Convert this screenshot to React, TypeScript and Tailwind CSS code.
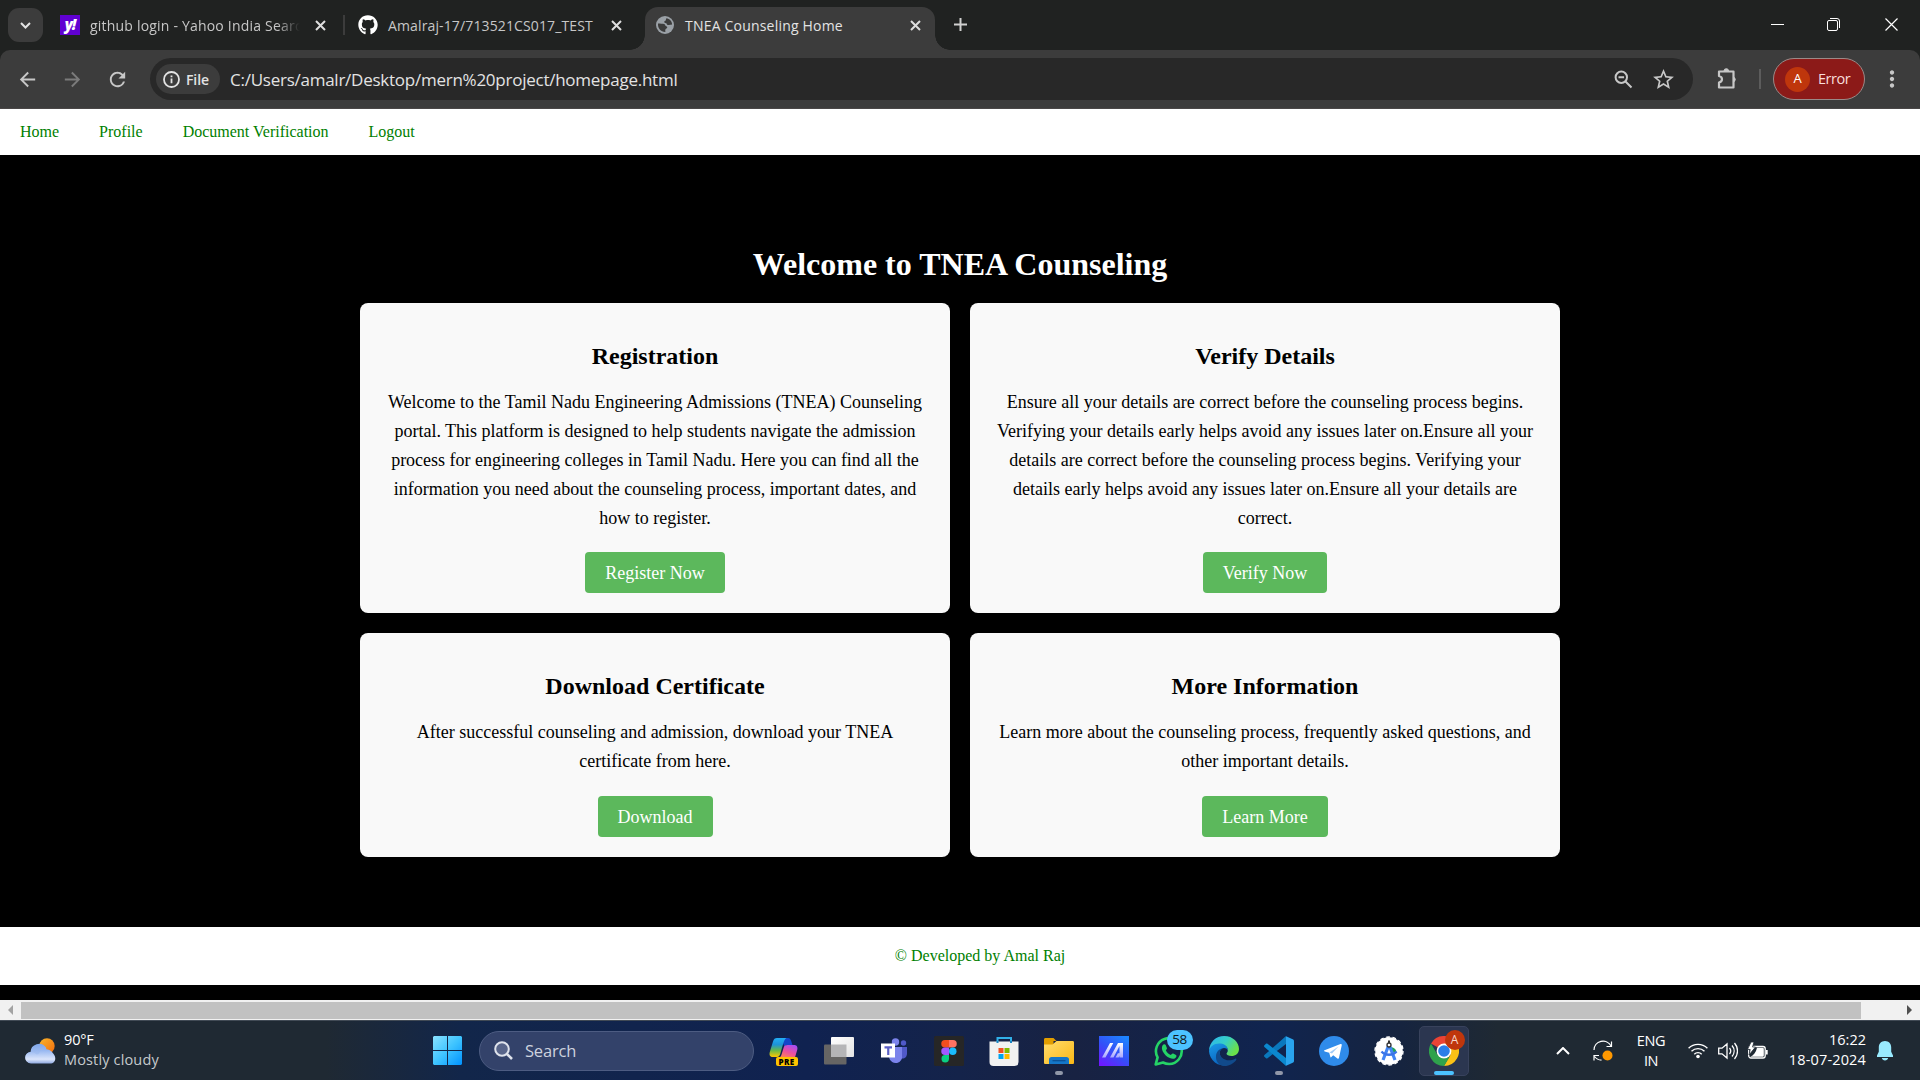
import type { ReactNode } from "react";
import { MdArrowBack, MdArrowForward, MdRefresh, MdStarOutline, MdMoreVert } from "react-icons/md";
import { FaGithub } from "react-icons/fa";

/* ---------- Browser chrome ---------- */

function TabClose() {
  return (
    <svg className="size-[11px] shrink-0" viewBox="0 0 11 11" fill="none" stroke="#dedede" strokeWidth="2">
      <path d="M1 1l9 9M10 1l-9 9" />
    </svg>
  );
}

function Globe() {
  return (
    <svg className="size-[18px] shrink-0" viewBox="0 0 18 18">
      <circle cx="9" cy="9" r="9" fill="#9aa0a6" />
      <path d="M2 7.500c2 .2 4.500.2 6.200.6 1.200.4.8 1.900 2 2.100 1.500.3 1.300 1.800.2 2.300-1.200.5-1.300 1.800-1 3.500C5 16.200 1.600 12.500 2 7.500z" fill="#3c3c3c" />
      <path d="M10.500 2.200c3 .4 5.400 2.800 5.600 6-1 .8-1.900.3-2.900.7-1.300.5-2.300-.2-2.500-1.200-.2-.9-2.300-.3-2.500-1.600-.1-1 1.200-1 1.600-1.800.3-.7 0-1.500.7-2.100z" fill="#3c3c3c" />
    </svg>
  );
}

function TabStrip() {
  return (
    <div className="flex h-[50px] bg-[#202221] text-[14px] leading-[20px] text-[#c7c7c7]">
      <div className="mt-2 ml-2 flex h-[34px] w-[35px] items-center justify-center rounded-[11px] bg-[#3c3c3c]">
        <svg className="size-[11px]" viewBox="0 0 11 11" fill="none" stroke="#e3e3e3" strokeWidth="2">
          <path d="M1 3l4.500 4.500L10 3" />
        </svg>
      </div>
      <div className="ml-[17px] flex h-[50px] w-[283px] shrink-0 items-center">
        <div className="flex size-5 shrink-0 items-center justify-center bg-[#6001d2] text-[15px] leading-[18px] font-black text-white italic">
          <span className="-mt-[3px] tracking-[-1px]">y!</span>
        </div>
        <div className="mt-px ml-[10px] w-[212px] overflow-hidden whitespace-nowrap tracking-[0.2px] [mask-image:linear-gradient(90deg,#000_88%,transparent_99%)]">
          github login - Yahoo India Search
        </div>
        <div className="ml-[13px] flex"><TabClose /></div>
      </div>
      <div className="mt-[15px] h-5 w-[2px] bg-[#3c3c3c]" />
      <div className="ml-[13px] flex h-[50px] w-[287px] items-center">
        <FaGithub className="size-5 shrink-0 text-white" />
        <div className="mt-px ml-[10px] w-[213px] whitespace-nowrap tracking-[0.13px]">Amalraj-17/713521CS017_TEST</div>
        <div className="ml-[10px] flex"><TabClose /></div>
      </div>
      <div className="-ml-[15px] flex h-[50px]">
        <div className="size-[15px] self-end bg-[radial-gradient(circle_at_0_0,transparent_14.500px,#3c3c3c_15px)]" />
        <div className="mt-[7px] flex h-[43px] w-[290px] items-center rounded-t-[13px] bg-[#3c3c3c] pb-[7px] pl-[11px] text-[#e3e3e3]">
          <Globe />
          <div className="mt-px ml-[11px] w-[213px] whitespace-nowrap tracking-[0.2px]">TNEA Counseling Home</div>
          <div className="ml-[12px] flex"><TabClose /></div>
        </div>
        <div className="size-[15px] self-end bg-[radial-gradient(circle_at_100%_0,transparent_14.500px,#3c3c3c_15px)]" />
      </div>
      <svg className="mt-[18px] ml-1 size-[13px]" viewBox="0 0 13 13" stroke="#d0d0d0" strokeWidth="2">
        <path d="M6.500 0v13M0 6.500h13" />
      </svg>
      <div className="mt-[18px] mr-[22px] ml-auto flex">
        <svg className="size-[13px]" viewBox="0 0 13 13" stroke="#fff"><path d="M0 6.500h13" /></svg>
        <svg className="ml-[43px] size-[13px]" viewBox="0 0 13 13" fill="none" stroke="#fff">
          <rect x=".5" y="2.500" width="10" height="10" rx="1.500" />
          <path d="M3 .5h7a2.500 2.500 0 012.500 2.500v7" />
        </svg>
        <svg className="ml-[45px] size-[13px]" viewBox="0 0 13 13" stroke="#fff" strokeWidth="1.200"><path d="M.5.500l12 12M12.500.500l-12 12" /></svg>
      </div>
    </div>
  );
}

function Toolbar() {
  return (
    <div className="bg-[#202221]">
      <div className="flex h-[59px] items-center rounded-t-[10px] border-b border-[#4a4747] bg-[#3c3c3c] text-[#c7c7c7]">
        <div className="flex w-[150px] items-center pl-[16px]">
          <MdArrowBack className="size-[23px]" />
          <MdArrowForward className="ml-[22px] size-[23px] text-[#7b7b7b]" />
          <MdRefresh className="ml-[22px] size-[23px]" />
        </div>
        <div className="flex h-[42px] w-[1543px] items-center rounded-full bg-[#282828] pl-[6px]">
          <div className="flex h-[30px] w-[64px] items-center rounded-full bg-[#3c3c3c] pl-[7px] text-[#e3e3e3]">
            <svg className="size-[17px]" viewBox="0 0 17 17" fill="none" stroke="#e3e3e3" strokeWidth="1.800">
              <circle cx="8.500" cy="8.500" r="7.500" />
              <path d="M8.500 7.600v4.700M8.500 4.500v1.800" />
            </svg>
            <span className="ml-[6px] text-[14px] font-semibold tracking-[-0.1px]">File</span>
          </div>
          <span className="mt-px ml-[10px] text-[17px] tracking-[-0.25px] text-[#e3e3e3]">C:/Users/amalr/Desktop/mern%20project/homepage.html</span>
          <svg className="ml-auto size-[19px]" viewBox="0 0 19 19" fill="none" stroke="#c7c7c7" strokeWidth="2">
            <circle cx="7.300" cy="7.300" r="5.700" />
            <path d="M11.500 11.500l6 6M4.500 7.300h5.600" />
          </svg>
          <MdStarOutline className="mr-[17px] ml-[18px] size-[25px]" />
        </div>
        <svg className="ml-[23px] size-[22px]" viewBox="0 0 22 22" fill="none" stroke="#c7c7c7" strokeWidth="2.200">
          <path d="M3 3.500h14.500v16H3v-5c4-1 4-5.500 0-6.500z" strokeLinejoin="round" />
          <path d="M8 3a2.300 2.300 0 014.600 0zM18 9.500a2.200 2.200 0 010 4z" fill="#c7c7c7" stroke="#c7c7c7" strokeWidth="1" />
        </svg>
        <div className="ml-[21px] h-5 w-[2px] bg-[#5c5c5c]" />
        <div className="ml-[12px] flex h-[42px] w-[92px] items-center rounded-full border border-[#9a8a88] bg-[#8c1a18] pl-[11px] text-[14.500px] text-[#f9dedc]">
          <span className="flex size-[25px] items-center justify-center rounded-full bg-[#bf360c] text-[13px] text-white">A</span>
          <span className="ml-[8px] tracking-[-0.45px]">Error</span>
        </div>
        <MdMoreVert className="ml-[14px] size-[26px]" />
      </div>
    </div>
  );
}

/* ---------- Page ---------- */

const cards = [
  {
    title: "Registration",
    text: "Welcome to the Tamil Nadu Engineering Admissions (TNEA) Counseling portal. This platform is designed to help students navigate the admission process for engineering colleges in Tamil Nadu. Here you can find all the information you need about the counseling process, important dates, and how to register.",
    action: "Register Now",
  },
  {
    title: "Verify Details",
    text: "Ensure all your details are correct before the counseling process begins. Verifying your details early helps avoid any issues later on.Ensure all your details are correct before the counseling process begins. Verifying your details early helps avoid any issues later on.Ensure all your details are correct.",
    action: "Verify Now",
  },
  {
    title: "Download Certificate",
    text: "After successful counseling and admission, download your TNEA certificate from here.",
    action: "Download",
  },
  {
    title: "More Information",
    text: "Learn more about the counseling process, frequently asked questions, and other important details.",
    action: "Learn More",
  },
];

function Page() {
  return (
    <div className="flex h-[891px] flex-col bg-black font-['Liberation_Serif',serif] text-black">
      <nav className="flex h-[46px] items-center gap-10 bg-white pl-5 text-[16px] text-[#008000]">
        <a>Home</a>
        <a>Profile</a>
        <a>Document Verification</a>
        <a>Logout</a>
      </nav>
      <main className="h-[772px] pt-[91px]">
        <h1 className="text-center text-[32px] leading-[36px] font-bold text-white">Welcome to TNEA Counseling</h1>
        <div className="mx-auto mt-[21px] grid w-[1200px] grid-cols-2 grid-rows-[310px_224px] gap-5">
          {cards.map((c) => (
            <section key={c.title} className="flex flex-col items-center rounded-lg bg-[#f9f9f9] px-[25px] pt-[39px] pb-5 text-center">
              <h2 className="text-[24px] leading-[28px] font-bold">{c.title}</h2>
              <p className="mt-[18px] text-[18px] leading-[29px]">{c.text}</p>
              <button className="mt-auto h-[41px] rounded-[4px] bg-[#5cb85c] px-5 text-[18px] leading-[20px] text-white">{c.action}</button>
            </section>
          ))}
        </div>
      </main>
      <footer className="flex h-[58px] items-center justify-center bg-white pl-10 text-[16px] text-[#008000]">© Developed by Amal Raj</footer>
    </div>
  );
}

function ScrollBar() {
  return (
    <div className="flex h-5 items-center bg-[#f1f1f1]">
      <div className="flex w-[21px] justify-end pr-2">
        <div className="border-y-[5px] border-r-[5px] border-y-transparent border-r-[#a3a3a3]" />
      </div>
      <div className="mt-[1px] h-[17px] w-[1840px] bg-[#c1c1c1]" />
      <div className="flex flex-1 justify-end pr-2">
        <div className="border-y-[5px] border-l-[5px] border-y-transparent border-l-[#505050]" />
      </div>
    </div>
  );
}

/* ---------- Taskbar ---------- */

function Slot({ children, dot, active }: { children: ReactNode; dot?: boolean; active?: boolean }) {
  return (
    <div className="relative flex h-[60px] w-[55px] items-center justify-center">
      {active && <div className="absolute inset-x-[2.500px] inset-y-[5px] rounded-[5px] border border-[#38425c] bg-[#2b3650]" />}
      <div className="relative size-[30px]">{children}</div>
      {dot && <div className="absolute bottom-[6px] h-[4px] w-2 rounded-full bg-[#9097a8]" />}
      {active && <div className="absolute bottom-[6px] h-[4px] w-5 rounded-full bg-[#4cc2ff]" />}
    </div>
  );
}

function WeatherIcon() {
  return (
    <svg className="h-[26px] w-[31px]" viewBox="0 0 31 26">
      <defs>
        <linearGradient id="sun" x1="0" y1="0" x2="1" y2="1"><stop stopColor="#f9b52b" /><stop offset="1" stopColor="#f36b0c" /></linearGradient>
        <linearGradient id="cloudBack" x1="0" y1="0" x2="0" y2="1"><stop stopColor="#7fa6ea" /><stop offset="1" stopColor="#c9d9f8" /></linearGradient>
        <linearGradient id="cloudFront" x1="0" y1="0" x2="0" y2="1"><stop stopColor="#8fb2f0" /><stop offset=".7" stopColor="#dbe5fb" /><stop offset="1" stopColor="#8fa9e0" /></linearGradient>
      </defs>
      <circle cx="22" cy="8" r="7.700" fill="url(#sun)" />
      <path d="M6 25a5.500 5.500 0 01-.5-11A8.500 8.500 0 0121 9.500L24 25z" fill="url(#cloudBack)" />
      <path d="M6 25.500a5.700 5.700 0 010-11.400c2 0 3.500.7 4.700 1.900.8.700 2.300.6 3-.3a8.300 8.300 0 0114.300-.500c3.700 3.500 3 10.300-3 10.300z" fill="url(#cloudFront)" />
    </svg>
  );
}

function StartIcon() {
  return (
    <svg className="size-[29px]" viewBox="0 0 29 29">
      <defs><linearGradient id="win" gradientUnits="userSpaceOnUse" x1="0" y1="0" x2="29" y2="29"><stop stopColor="#8ae2ff" /><stop offset=".5" stopColor="#3fc4ff" /><stop offset="1" stopColor="#0092ff" /></linearGradient></defs>
      <path d="M1 0h13v14H0V1zM15 0h13l1 1v13H15zM0 15h14v14H1l-1-1zM15 15h14v13l-1 1H15z" fill="url(#win)" />
    </svg>
  );
}

function CopilotIcon() {
  return (
    <>
      <svg className="size-[30px]" viewBox="0 0 30 30">
        <defs>
          <linearGradient id="copA" x1="0" y1="0" x2="0" y2="1"><stop stopColor="#23aef5" /><stop offset=".35" stopColor="#1d93d8" /><stop offset=".65" stopColor="#66b94a" /><stop offset="1" stopColor="#ffc800" /></linearGradient>
          <linearGradient id="copB" x1="0.800" y1="0" x2=".2" y2="1"><stop stopColor="#a34df5" /><stop offset=".5" stopColor="#ec4f9e" /><stop offset="1" stopColor="#ff8a4a" /></linearGradient>
        </defs>
        <path d="M12 2h7c2 0 3 2 3.500 4l1 3h-5c-1.500 0-2.300 1-2.800 2.500z" fill="#1246c9" />
        <path d="M8 2h9.500c-2 1-2.800 4-3.700 7l-2.600 9c-.6 2-1.700 3-3.200 3H4c-3 0-4-2-3.200-5L4 5.500C4.700 3 6 2 8 2z" fill="url(#copA)" />
        <path d="M18.500 9H25c3 0 4 2.200 3.200 5l-2.400 8H8c3 0 4-1.500 4.700-4l2-6.500c.6-1.800 2-2.500 3.800-2.500z" fill="url(#copB)" />
      </svg>
      <span className="absolute top-[21px] left-[7px] flex h-[9px] w-[22px] items-center justify-center rounded-[2px] bg-[#ffc400] text-[8px] leading-[9px] font-extrabold tracking-[0.3px] text-black">PRE</span>
    </>
  );
}

function TaskViewIcon() {
  return (
    <svg className="size-[30px]" viewBox="0 0 30 30">
      <defs><linearGradient id="tv" x1="0" y1="0" x2="1" y2="1"><stop stopColor="#fff" /><stop offset="1" stopColor="#e3e3e3" /></linearGradient></defs>
      <rect x="0" y="8.500" width="22.500" height="20" rx="1" fill="#666564" />
      <rect x="7" y="1" width="23" height="20" rx="1" fill="url(#tv)" />
      <rect x="7" y="8.500" width="15.500" height="12.500" fill="#b5b5b7" />
    </svg>
  );
}

function TeamsIcon() {
  return (
    <svg className="size-[30px]" viewBox="0 0 30 30">
      <circle cx="24.500" cy="7" r="2.700" fill="#5059c9" />
      <path d="M19 11h9v6.500c0 3-2 5-4.500 5s-4.500-2-4.500-5z" fill="#5059c9" />
      <circle cx="16.500" cy="6" r="3.700" fill="#7b83eb" />
      <path d="M11 11h12v8a6.500 6.500 0 01-12.800 3z" fill="#7b83eb" />
      <rect x="2" y="7.500" width="14" height="14" fill="#fff" />
      <path d="M5.500 11.300h7.500M9.250 11.300v7.700" stroke="#5b5fc7" strokeWidth="2.200" fill="none" />
    </svg>
  );
}

function FigmaIcon() {
  return (
    <svg className="size-[30px]" viewBox="0 0 30 30">
      <rect width="30" height="30" rx="1.500" fill="#262626" />
      <path d="M15 4h-4a3.750 3.750 0 000 7.500h4z" fill="#f24e1e" />
      <path d="M15 4h4a3.750 3.750 0 010 7.500h-4z" fill="#ff7262" />
      <path d="M15 11.500h-4a3.750 3.750 0 000 7.500h4z" fill="#a259ff" />
      <circle cx="18.750" cy="15.200" r="3.750" fill="#1abcfe" />
      <path d="M15 19h-4a3.750 3.750 0 104 3.750z" fill="#0acf83" />
    </svg>
  );
}

function StoreIcon() {
  return (
    <svg className="size-[30px]" viewBox="0 0 30 30">
      <path d="M8.500 7V2h13.500v5" fill="none" stroke="#31b0e8" strokeWidth="2" />
      <path d="M.5 5.500h29V26a4 4 0 01-4 4h-21a4 4 0 01-4-4z" fill="#f1f1f1" />
      <path d="M8.500 5v2M22 5v2" stroke="#1a86c4" strokeWidth="2" />
      <rect x="9.500" y="12" width="5" height="5" fill="#f25022" />
      <rect x="15.500" y="12" width="5" height="5" fill="#7fba00" />
      <rect x="9.500" y="18" width="5" height="5" fill="#00a4ef" />
      <rect x="15.500" y="18" width="5" height="5" fill="#ffb900" />
    </svg>
  );
}

function ExplorerIcon() {
  return (
    <svg className="size-[30px]" viewBox="0 0 30 30">
      <defs><linearGradient id="fold" x1="0" y1="0" x2="1" y2="1"><stop stopColor="#ffdd6e" /><stop offset="1" stopColor="#fcb815" /></linearGradient></defs>
      <path d="M0 3.500C0 2.700.5 2 1.500 2h8l3 3h-3v4H0z" fill="#e19d00" />
      <path d="M0 8.500h8.500L12.500 5H28.500c1 0 1.500.5 1.500 1.500v20c0 1-.5 1.500-1.500 1.500h-27C.5 28 0 27.500 0 26.500z" fill="url(#fold)" />
      <path d="M5 28v-4.500C5 22 6 21 7.500 21h15c1.500 0 2.500 1 2.500 2.500V28z" fill="#1577c9" />
      <path d="M8.500 24.700h13" stroke="#0b4f92" strokeWidth="1.200" />
    </svg>
  );
}

function AsusIcon() {
  return (
    <svg className="size-[30px]" viewBox="0 0 30 30">
      <defs>
        <linearGradient id="asus" x1=".8" y1="0" x2=".1" y2="1"><stop stopColor="#1d84ff" /><stop offset=".5" stopColor="#3450f8" /><stop offset="1" stopColor="#7016ff" /></linearGradient>
        <linearGradient id="asusW" x1="0" y1="0" x2="0" y2="1"><stop stopColor="#fff" /><stop offset="1" stopColor="#a9a8ff" /></linearGradient>
      </defs>
      <rect width="30" height="30" fill="url(#asus)" />
      <path d="M3 21.500L11 7h3.300L6.500 21.500zM11 21.500L19 7h5v14.500h-3.500V10l-6 11.500zM16.500 21.500l2.400-4.300h3l-2.200 4.300z" fill="url(#asusW)" />
    </svg>
  );
}

function WhatsAppIcon() {
  return (
    <>
      <svg className="size-[30px]" viewBox="0 0 30 30">
        <path d="M1.700 28.400l1.900-7A12.900 12.900 0 1115.200 28c-2.200 0-4.300-.5-6.200-1.500z" fill="none" stroke="#25d366" strokeWidth="2.600" strokeLinejoin="round" />
        <path d="M8.500 9.500c.8-1.500 2.600-1.700 3.200-.5l1.200 2.900c.3.900-.5 1.500-1.100 2.300 1.300 2.600 2.800 3.700 5.100 4.700.8-.9 1.300-1.800 2.300-1.400l2.800 1.400c1 .6.300 2.300-.600 3.100-1.500 1.200-3.600 1-5.600.1-3-1.300-5.500-3.700-7-6.600-.9-1.900-1.300-4.300-.3-6z" fill="#25d366" />
      </svg>
      <span className="absolute -top-[6px] left-[13px] flex h-5 w-[26px] items-center justify-center rounded-full bg-[#4cc2ff] text-[13.500px] tracking-[-0.500px] text-[#101820]">58</span>
    </>
  );
}

function EdgeIcon() {
  return (
    <svg className="size-[30px]" viewBox="0 0 30 30">
      <defs>
        <linearGradient id="edA" x1="0" y1="0" x2="1" y2=".5"><stop stopColor="#2bb2f3" /><stop offset=".55" stopColor="#37cfc6" /><stop offset="1" stopColor="#6be04a" /></linearGradient>
        <linearGradient id="edB" x1="0" y1="0" x2=".4" y2="1"><stop stopColor="#1a9be8" /><stop offset="1" stopColor="#0a65c0" /></linearGradient>
      </defs>
      <path d="M0 14.500C.5 6 7 0 15.200 0 24 0 30 6.500 30 13c0 4.500-3.500 7-7.500 7-3 0-5-1-5-2.200 0-.8 1.300-1.300 1.300-3.600 0-2.700-2.500-5.200-6.300-5.200C6 9 1.500 12 0 14.500z" fill="url(#edA)" />
      <path d="M0 15C.8 10.500 5.500 6.800 11.500 7.500c5 .5 7.500 3.800 7.300 7-.4-1.700-2-2.500-3.800-2.500-4.500 0-5.500 6-2.500 10.500 1.600 2.400 4 5 6 6.500A15 15 0 010 15z" fill="url(#edB)" />
      <path d="M13.500 12.500c-3 1.500-3.800 6-.7 9 3.500 3.500 9.200 3.500 13.200 1.200 1-.6 1.800.2 1.200 1.200C25 27 20.500 30 15.500 30 9.500 29.500 6.500 25 7 20c.3-4 3-7.200 6.500-7.500z" fill="#114a8b" />
    </svg>
  );
}

function VSCodeIcon() {
  return (
    <svg className="size-[30px]" viewBox="0 0 30 30">
      <path d="M22 0v8L3.500 22.300c-.5.400-1.100.4-1.500 0L.4 20.800c-.5-.5-.5-1.200 0-1.700z" fill="#0a78bd" />
      <path d="M22 30v-8L3.500 7.700C3 7.300 2.400 7.300 2 7.700L.4 9.200c-.5.500-.5 1.200 0 1.700z" fill="#0b88cf" />
      <path d="M22 29.800l6.700-3c.8-.4 1.300-1.100 1.300-2V5.200c0-.9-.5-1.600-1.300-2L22 .2z" fill="#29a4ee" />
    </svg>
  );
}

function TelegramIcon() {
  return (
    <svg className="size-[30px]" viewBox="0 0 30 30">
      <circle cx="15" cy="15" r="15" fill="#2f8bea" />
      <path d="M5.500 14.300L21.500 8c.8-.3 1.500.2 1.200 1.400L20 21.700c-.2 1-.8 1.200-1.600.7l-4.200-3.100-2.100 2c-.3.300-.6.300-.7-.2l-1.200-4.300-4.500-1.400c-.9-.3-.9-.8-.2-1.100z" fill="#fff" />
      <path d="M10.500 16.500l9-6-6.500 7z" fill="#2f8bea" opacity=".45" />
    </svg>
  );
}

function AndroidStudioIcon() {
  return (
    <svg className="size-[30px]" viewBox="0 0 30 30">
      <circle cx="15" cy="15" r="13.800" fill="#fff" />
      <circle cx="15" cy="15" r="14" fill="none" stroke="#fff" strokeWidth="1.400" strokeDasharray="3.600 2.680" />
      <path d="M16 11c4 0 6.500 2.500 6.500 5.500h-5z" fill="#22a35a" />
      <path d="M15 8.500L9 24M15 8.500L21 24" stroke="#4285f4" strokeWidth="3.200" fill="none" />
      <path d="M7.500 15.500c3.500 4.300 11.500 4.300 15 0" stroke="#3b74e8" strokeWidth="2.400" fill="none" />
      <path d="M15 4.500v3" stroke="#333" strokeWidth="2" />
      <circle cx="15" cy="9" r="2" fill="#fff" stroke="#333" strokeWidth="1.300" />
    </svg>
  );
}

function ChromeIcon() {
  return (
    <>
      <svg className="size-[30px]" viewBox="0 0 30 30">
        <path d="M15 15L2 7.500A15 15 0 0128 7.500z" fill="#ea4335" />
        <path d="M15 7.500h13A15 15 0 0115 30l6.500-11.250z" fill="#fbc116" />
        <path d="M2 7.500l6.500 11.250L15 22.500l5.500-1.500L15 30A15 15 0 012 7.500z" fill="#2fa24c" />
        <circle cx="15" cy="15" r="7.400" fill="#fff" />
        <circle cx="15" cy="15" r="5.800" fill="#2b7de9" />
      </svg>
      <span className="absolute -top-[6px] left-4 flex size-5 items-center justify-center rounded-full bg-[#bf360c] text-[12px] text-[#f6d9cf]">A</span>
    </>
  );
}

function Tray() {
  return (
    <div className="mr-[27px] ml-auto flex h-full items-center text-[14.500px] leading-5 text-white">
      <svg className="h-2 w-[14px]" viewBox="0 0 14 8" fill="none" stroke="#fff" strokeWidth="2"><path d="M1 7l6-6 6 6" /></svg>
      <svg className="ml-[22px] h-[22px] w-[22px]" viewBox="0 0 22 22" fill="none" stroke="#fff" strokeWidth="1.200">
        <path d="M2 10a9 9 0 0117-4M19.500 1.500V6.500H14.500M2 20.500v-5h5M2.500 16.500c1.500 2 3.500 3.500 7 3.700" />
        <circle cx="15.500" cy="15.500" r="5" fill="#ff9800" stroke="none" />
      </svg>
      <div className="ml-[21px] w-[32px] text-center tracking-[-0.400px]">ENG<br />IN</div>
      <svg className="ml-[21px] h-[17px] w-5" viewBox="0 0 20 17" fill="none" stroke="#fff" strokeWidth="1.400">
        <path d="M.6 6.200a13.400 13.400 0 0118.800 0M3.500 9.300a9.200 9.200 0 0113 0M6.300 12.200a5.200 5.200 0 017.400 0" />
        <circle cx="10" cy="14.500" r="1.800" fill="#fff" stroke="none" />
      </svg>
      <svg className="ml-[10px] h-[18px] w-5" viewBox="0 0 20 18" fill="none" stroke="#fff" strokeWidth="1.300">
        <path d="M.7 6.200h3.300L9 2v14L4 11.800H.7zM11.500 6c1.500 1.800 1.500 4.200 0 6M14 3.500c2.800 3.300 2.800 7.700 0 11M16.500 1c4 4.700 4 11.300 0 16" />
      </svg>
      <svg className="ml-[9px] h-[17px] w-[21px]" viewBox="0 0 21 17">
        <rect x="1.700" y="4.500" width="16.500" height="11.500" rx="2.200" fill="none" stroke="#fff" strokeWidth="1.300" />
        <path d="M10 5.800h5.500c.8 0 1.300.5 1.300 1.300v6.300c0 .8-.5 1.300-1.300 1.300H3.300C6.500 13.500 9 10.500 10 5.800z" fill="#fff" />
        <path d="M19 8h1.700v4.500H19z" fill="#fff" />
        <path d="M4 0L.5 7.500h2.700L2 13l6.500-8H5.500L7 0z" fill="#fff" stroke="#1f2933" strokeWidth=".8" />
      </svg>
      <div className="mb-[2px] ml-[16px] w-[82px] text-right tracking-[0.150px] whitespace-nowrap">
        <div className="tracking-[0px]">16:22</div>
        <div>18-07-2024</div>
      </div>
      <svg className="ml-[11px] h-5 w-4" viewBox="0 0 16 20" fill="#99ebff">
        <path d="M8 0c3.800 0 6.200 2.800 6.200 6.200v4.500L16 14.500V16H0v-1.500l1.800-3.800V6.200C1.800 2.800 4.200 0 8 0zM4.800 17h6.400c-.4 1.500-1.600 2.500-3.200 2.500S5.200 18.500 4.800 17z" />
      </svg>
    </div>
  );
}

function Taskbar() {
  return (
    <div className="flex h-[60px] items-center border-t border-[#414a55] bg-[linear-gradient(90deg,#1f2933_0%,#1f2933_17%,#12264a_24%,#102250_42%,#14234a_50%,#182242_56%,#10244f_66%,#16243f_73%,#1f2933_78%,#1f2933_100%)]">
      <div className="flex w-[433px] items-center pl-[25px] text-[14.500px] leading-5 text-white">
        <WeatherIcon />
        <div className="mb-[2px] ml-[8px] tracking-[0.150px]">
          <div className="tracking-[-0.150px]">90°F</div>
          <div className="text-[#c5c9cd]">Mostly cloudy</div>
        </div>
      </div>
      <StartIcon />
      <div className="ml-[17px] flex h-10 w-[275px] items-center rounded-full border border-[#4d5c82] bg-[#33426a] pl-[14px]">
        <svg className="size-[19px]" viewBox="0 0 19 19" fill="none" stroke="#dfe3ec" strokeWidth="2">
          <circle cx="8" cy="8" r="6.800" fill="#58658a" />
          <path d="M13 13l5 5" strokeWidth="2.600" />
        </svg>
        <span className="mt-px ml-[12px] text-[16.500px] tracking-[-0.200px] text-[#cdd2de]">Search</span>
      </div>
      <div className="ml-[2px] flex">
        <Slot><CopilotIcon /></Slot>
        <Slot><TaskViewIcon /></Slot>
        <Slot><TeamsIcon /></Slot>
        <Slot><FigmaIcon /></Slot>
        <Slot><StoreIcon /></Slot>
        <Slot dot><ExplorerIcon /></Slot>
        <Slot><AsusIcon /></Slot>
        <Slot><WhatsAppIcon /></Slot>
        <Slot><EdgeIcon /></Slot>
        <Slot dot><VSCodeIcon /></Slot>
        <Slot><TelegramIcon /></Slot>
        <Slot><AndroidStudioIcon /></Slot>
        <Slot active><ChromeIcon /></Slot>
      </div>
      <Tray />
    </div>
  );
}

export default function App() {
  return (
    <div className="h-[1080px] w-[1920px] overflow-hidden bg-black font-['Open_Sans','Noto_Sans',sans-serif]">
      <TabStrip />
      <Toolbar />
      <Page />
      <ScrollBar />
      <Taskbar />
    </div>
  );
}
